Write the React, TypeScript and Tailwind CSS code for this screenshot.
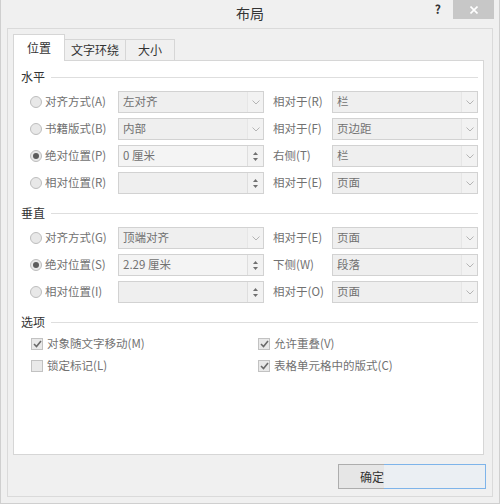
import type { ReactNode } from "react";

const font = "font-['Noto_Sans_CJK_SC','Noto_Sans',sans-serif]";

function Chevron() {
  return (
    <svg width="8" height="5" viewBox="0 0 8 5" className="block">
      <polyline points="0.5,0.5 4,4 7.5,0.5" fill="none" stroke="#b4b4b4" strokeWidth="1" />
    </svg>
  );
}

function Dropdown({ value }: { value: string }) {
  return (
    <div className="w-[146px] h-[22px] flex border border-[#d2d2d2] bg-[#efefef]">
      <div className="flex-1 flex items-center pl-[4px] text-[11.5px] text-[#717171] leading-none">{value}</div>
      <div className="w-[16px] flex items-center justify-center border-l border-[#e6e6e6] bg-[#f2f2f2]">
        <Chevron />
      </div>
    </div>
  );
}

function Spin({ value, light }: { value: string; light?: boolean }) {
  return (
    <div className={`w-[146px] h-[22px] flex border border-[#d2d2d2] ${light ? "bg-[#f4f4f4]" : "bg-[#efefef]"}`}>
      <div className="flex-1 flex items-center pl-[4px] text-[11.5px] text-[#717171] leading-none">{value}</div>
      <div className="w-[16px] flex flex-col items-center justify-center gap-[3px] border-l border-[#dedede] bg-[#f2f2f2]">
        <svg width="5" height="3" viewBox="0 0 5 3" className="block">
          <polygon points="0,3 2.5,0 5,3" fill="#707070" />
        </svg>
        <svg width="5" height="3" viewBox="0 0 5 3" className="block">
          <polygon points="0,0 2.5,3 5,0" fill="#707070" />
        </svg>
      </div>
    </div>
  );
}

function Radio({ checked }: { checked?: boolean }) {
  return (
    <div className="w-[12px] h-[12px] rounded-full border border-[#bdbdbd] bg-[#e8e8e8] flex items-center justify-center">
      {checked && <div className="w-[6px] h-[6px] rounded-full bg-[#5c5c5c]" />}
    </div>
  );
}

function Check({ checked, label }: { checked?: boolean; label: string }) {
  return (
    <div className="flex items-center gap-[4px] h-[16px]">
      <div className="w-[12px] h-[12px] border border-[#c2c2c2] bg-[#e9e9e9] flex items-center justify-center">
        {checked && (
          <svg width="9" height="8" viewBox="0 0 9 8" className="block">
            <polyline points="1,4 3.5,6.5 8,1" fill="none" stroke="#6a6a6a" strokeWidth="1.6" />
          </svg>
        )}
      </div>
      <span className="text-[11.5px] text-[#717171] leading-none">{label}</span>
    </div>
  );
}

function Row({ radio, label, field, rel, right }: { radio?: boolean; label: string; field: ReactNode; rel: string; right: string }) {
  return (
    <div className="flex items-center h-[22px]">
      <div className="w-[97px] flex items-center gap-[3px] pl-[9px]">
        <Radio checked={radio} />
        <span className="text-[11.5px] text-[#717171] leading-none whitespace-nowrap">{label}</span>
      </div>
      {field}
      <span className="w-[68px] pl-[9px] text-[11.5px] text-[#717171] leading-none whitespace-nowrap">{rel}</span>
      <Dropdown value={right} />
    </div>
  );
}

function Header({ text }: { text: string }) {
  return (
    <div className="flex items-center h-[16px]">
      <span className="text-[12px] text-[#333333] leading-none">{text}</span>
      <div className="flex-1 h-px bg-[#dedede] ml-[6px]" />
    </div>
  );
}

export default function App() {
  return (
    <div className={`w-[500px] h-[504px] bg-[#f0f0f0] border-x border-b border-[#cfcfcf] flex flex-col ${font}`}>
      {/* Title bar */}
      <div className="h-[28px] grid grid-cols-[1fr_auto_1fr]">
        <div />
        <div className="flex items-center text-[14px] text-[#333333] pb-[1px]">布局</div>
        <div className="flex items-start justify-end">
          <span className="mt-[3px] mr-[12px] text-[12px] font-bold text-[#333333] leading-none">?</span>
          <div className="w-[41px] h-[19px] mr-[5px] bg-[#c7c7c7] flex items-center justify-center">
            <svg width="8" height="8" viewBox="0 0 8 8" className="block">
              <path d="M0.5 0.5 L7.5 7.5 M7.5 0.5 L0.5 7.5" stroke="#ffffff" strokeWidth="1.6" />
            </svg>
          </div>
        </div>
      </div>

      {/* Frame */}
      <div className="h-[469px] mx-[6px] border border-[#dadada] flex flex-col pt-[5px] pl-[5px] pr-[8px]">
        {/* Tabs */}
        <div className="flex items-end h-[26px]">
          <div className="w-[52px] h-[27px] -mb-px relative z-10 bg-white border border-b-0 border-[#d6d6d6] flex items-center justify-center text-[12px] text-[#333333]">位置</div>
          <div className="w-[62px] h-[21px] -ml-px bg-[#f0f0f0] border border-b-0 border-[#d6d6d6] flex items-center justify-center text-[12px] text-[#333333]">文字环绕</div>
          <div className="w-[50px] h-[21px] -ml-px bg-[#f0f0f0] border border-b-0 border-[#d6d6d6] flex items-center justify-center text-[12px] text-[#333333]">大小</div>
        </div>

        {/* Panel */}
        <div className="h-[395px] bg-white border border-[#d6d6d6] pt-[8px] pl-[7px] pr-[5px] flex flex-col">
          <Header text="水平" />
          <div className="mt-[6px] flex flex-col gap-[5px]">
            <Row label="对齐方式(A)" field={<Dropdown value="左对齐" />} rel="相对于(R)" right="栏" />
            <Row label="书籍版式(B)" field={<Dropdown value="内部" />} rel="相对于(F)" right="页边距" />
            <Row radio label="绝对位置(P)" field={<Spin value="0 厘米" light />} rel="右侧(T)" right="栏" />
            <Row label="相对位置(R)" field={<Spin value="" />} rel="相对于(E)" right="页面" />
          </div>

          <div className="mt-[11px]">
            <Header text="垂直" />
          </div>
          <div className="mt-[6px] flex flex-col gap-[5px]">
            <Row label="对齐方式(G)" field={<Dropdown value="顶端对齐" />} rel="相对于(E)" right="页面" />
            <Row radio label="绝对位置(S)" field={<Spin value="2.29 厘米" light />} rel="下侧(W)" right="段落" />
            <Row label="相对位置(I)" field={<Spin value="" />} rel="相对于(O)" right="页面" />
          </div>

          <div className="mt-[11px]">
            <Header text="选项" />
          </div>
          <div className="mt-[6px] pl-[10px] grid grid-cols-[227px_1fr] gap-y-[6px]">
            <Check checked label="对象随文字移动(M)" />
            <Check checked label="允许重叠(V)" />
            <Check label="锁定标记(L)" />
            <Check checked label="表格单元格中的版式(C)" />
          </div>
        </div>

        {/* Buttons */}
        <div className="flex justify-end mt-[9px] -mr-[2px]">
          <div className="flex h-[25px]">
            <div className="w-[46px] border border-r-0 border-[#adadad] bg-[#e6e6e6] flex items-center justify-end text-[12px] text-[#333333]">确定</div>
            <div className="w-[102px] border border-l-0 border-[#7eb4ea] bg-[#ebeff3]" />
          </div>
        </div>
      </div>
    </div>
  );
}
